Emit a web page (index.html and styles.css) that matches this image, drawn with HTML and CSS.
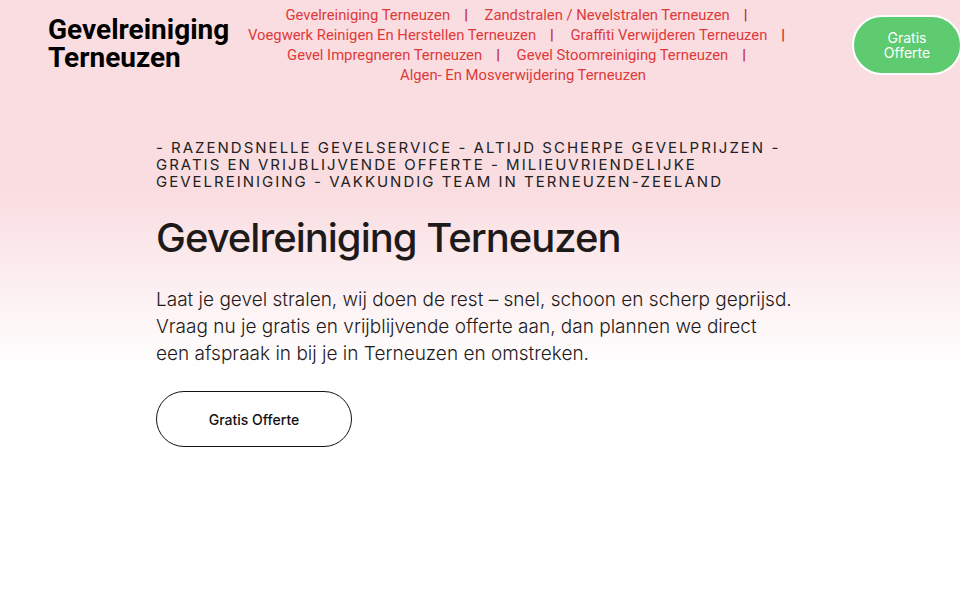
FILE: index.html
```html
<!DOCTYPE html>
<html lang="nl">
<head>
<meta charset="utf-8">
<title>Gevelreiniging Terneuzen</title>
<link rel="stylesheet" href="styles.css">
</head>
<body>
<div class="page">
  <header class="header">
    <div class="logo">Gevelreiniging<br>Terneuzen</div>
    <nav class="nav">
      <ul>
        <li><a href="#">Gevelreiniging Terneuzen</a></li>
        <li><a href="#">Zandstralen / Nevelstralen Terneuzen</a></li>
        <li><a href="#">Voegwerk Reinigen En Herstellen Terneuzen</a></li>
        <li><a href="#">Graffiti Verwijderen Terneuzen</a></li>
        <li><a href="#">Gevel Impregneren Terneuzen</a></li>
        <li><a href="#">Gevel Stoomreiniging Terneuzen</a></li>
        <li><a href="#">Algen- En Mosverwijdering Terneuzen</a></li>
      </ul>
    </nav>
    <a class="cta" href="#">Gratis<br>Offerte</a>
  </header>
  <main class="hero">
    <p class="tagline">- Razendsnelle gevelservice - Altijd scherpe gevelprijzen - Gratis en vrijblijvende offerte - Milieuvriendelijke gevelreiniging - Vakkundig team in Terneuzen-Zeeland</p>
    <h1 class="title">Gevelreiniging Terneuzen</h1>
    <p class="lead">Laat je gevel stralen, wij doen de rest – snel, schoon en scherp geprijsd. Vraag nu je gratis en vrijblijvende offerte aan, dan plannen we direct een afspraak in bij je in Terneuzen en omstreken.</p>
    <a class="btn" href="#">Gratis Offerte</a>
  </main>
</div>
</body>
</html>
```
FILE: styles.css
```css
html, body {
  margin: 0;
  padding: 0;
}
body {
  background: #fff;
  overflow: hidden;
  font-family: "Inter", "Noto Sans", sans-serif;
}
.page {
  min-height: 600px;
  background: linear-gradient(to bottom, #f9dde1 0, #f9dde1 190px, #ffffff 370px, #ffffff 100%);
}
.header {
  display: flex;
  align-items: flex-start;
  padding: 5px 0 0 48px;
  height: 120px;
  box-sizing: border-box;
}
.logo {
  font-family: "Roboto", sans-serif;
  font-weight: 700;
  font-size: 28px;
  line-height: 28px;
  color: #000;
  margin-top: 11px;
  width: 185px;
  flex: none;
}
.nav {
  width: 580px;
  flex: none;
}
.nav ul {
  list-style: none;
  margin: 0;
  padding: 0;
  text-align: center;
  font-family: "Roboto", sans-serif;
  font-size: 14.8px;
  line-height: 20px;
}
.nav li {
  display: inline;
  white-space: nowrap;
}
.nav li:not(:last-child)::after {
  content: "|";
  color: #c62828;
  font-weight: 700;
  margin: 0 13px 0 14px;
}
.nav a {
  color: #e0393a;
  text-decoration: none;
}
.cta {
  margin-left: auto;
  margin-right: -2px;
  margin-top: 10px;
  width: 110px;
  height: 60px;
  box-sizing: border-box;
  border: 2px solid #fff;
  border-radius: 30px;
  background: #5ecb70;
  color: #fff;
  text-decoration: none;
  font-family: "Inter", sans-serif;
  font-size: 14px;
  line-height: 15px;
  display: flex;
  align-items: center;
  justify-content: center;
  text-align: center;
  flex: none;
}
.hero {
  max-width: 648px;
  margin: 0 auto;
  padding-top: 19px;
}
.tagline {
  margin: 0;
  font-family: "Inter", sans-serif;
  font-size: 15px;
  line-height: 17px;
  letter-spacing: 2px;
  text-transform: uppercase;
  color: #222;
}
.title {
  margin: 18px 0 0;
  font-family: "Inter", sans-serif;
  font-weight: 500;
  font-size: 40px;
  line-height: 60px;
  letter-spacing: -1px;
  color: #1e1a1a;
}
.lead {
  margin: 18px 0 0;
  max-width: 637px;
  font-family: "Inter", sans-serif;
  font-weight: 300;
  font-size: 19px;
  line-height: 27px;
  color: #1e1a1a;
}
.btn {
  display: flex;
  align-items: center;
  justify-content: center;
  margin-top: 24px;
  width: 196px;
  height: 56px;
  box-sizing: border-box;
  border: 1px solid #111;
  border-radius: 28px;
  color: #111;
  text-decoration: none;
  font-family: "Inter", sans-serif;
  font-weight: 500;
  font-size: 14px;
}
```
